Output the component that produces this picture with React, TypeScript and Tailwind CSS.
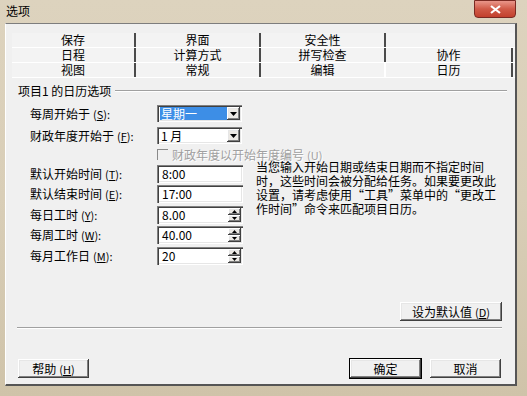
import type { ReactNode } from 'react';

const raised =
  'shadow-[inset_-1px_-1px_0_#404040,inset_1px_1px_0_#ffffff,inset_-2px_-2px_0_#808080,inset_2px_2px_0_#e6e6e6]';
const sunken =
  'shadow-[inset_1px_1px_0_#808080,inset_2px_2px_0_#404040,inset_-1px_-1px_0_#ffffff,inset_-2px_-2px_0_#e6e6e6]';

const tabRows = [
  ['保存', '界面', '安全性', ''],
  ['日程', '计算方式', '拼写检查', '协作'],
  ['视图', '常规', '编辑', '日历'],
];

const tabWidths = ['w-[124px]', 'w-[125px]', 'w-[125px]', 'w-[127px]'];

function tabEdge(row: number, col: number) {
  if (row === 0 && col === 3) return 'border-r-2 border-transparent';
  if (row === 2 && col === 2) return 'border-r-2 border-[#ffffff]';
  return 'border-r-2 border-[#4a4a4a]';
}

function Key({ k }: { k: string }) {
  return (
    <span className="ml-[3px] text-[11px]">
      (<span className="underline">{k}</span>):
    </span>
  );
}

function Row({ label, k, children, className = '' }: { label: string; k: string; children: ReactNode; className?: string }) {
  return (
    <div className={'flex items-center ' + className}>
      <div className="w-[127px] whitespace-nowrap">
        {label}
        <Key k={k} />
      </div>
      {children}
    </div>
  );
}

function Combo({ value, selected }: { value: string; selected?: boolean }) {
  return (
    <div className={'flex h-[17px] w-[85px] items-center bg-white p-[2px] ' + sunken}>
      <div className="flex h-full flex-1 items-center pl-[1px]">
        <span className={selected ? 'flex h-full w-full items-center bg-[#3d8ee6] pl-[1px] text-white' : 'pl-[1px]'}>
          {value}
        </span>
      </div>
      <div className={'flex h-full w-[13px] items-center justify-center bg-[#ece9e4] ' + raised}>
        <svg width="7" height="4" viewBox="0 0 7 4">
          <path d="M0 0h7L3.5 4z" fill="#000" />
        </svg>
      </div>
    </div>
  );
}

function TextBox({ value }: { value: string }) {
  return (
    <div className={'flex h-[18px] w-[86px] items-center bg-white pl-[5px] ' + sunken}>
      {value}
    </div>
  );
}

function Spin({ value }: { value: string }) {
  return (
    <div className={'flex h-[18px] w-[86px] items-center bg-white p-[2px] ' + sunken}>
      <div className="flex-1 pl-[3px]">{value}</div>
      <div className="flex h-full w-[13px] flex-col">
        <div className={'flex flex-1 items-center justify-center bg-[#ece9e4] ' + raised}>
          <svg width="5" height="3" viewBox="0 0 5 3">
            <path d="M0 3h5L2.5 0z" fill="#000" />
          </svg>
        </div>
        <div className={'flex flex-1 items-center justify-center bg-[#ece9e4] ' + raised}>
          <svg width="5" height="3" viewBox="0 0 5 3">
            <path d="M0 0h5L2.5 3z" fill="#000" />
          </svg>
        </div>
      </div>
    </div>
  );
}

function Btn({ children, w, isDefault }: { children: ReactNode; w: string; isDefault?: boolean }) {
  return (
    <div
      className={
        'flex h-[19px] items-center justify-center bg-[#f0f0f0] ' +
        w +
        ' ' +
        (isDefault ? 'outline outline-1 outline-[#000] ' : '') +
        raised
      }
    >
      {children}
    </div>
  );
}

export default function App() {
  return (
    <div
      className="flex h-[396px] w-[527px] flex-col bg-gradient-to-b from-[#ddd3be] via-[#d9ceb7] to-[#cfc3a9] text-[12px] leading-[14px] text-black"
      style={{ fontFamily: '"Noto Sans CJK SC", "Noto Sans", sans-serif' }}
    >
      {/* title bar */}
      <div className="flex h-[23px] shrink-0 items-start justify-between pl-[6px] pr-[11px]">
        <span className="mt-[4px]">选项</span>
        <div className="flex h-[18px] w-[42px] items-center justify-center rounded-b-[4px] border border-[#7a2a22] bg-gradient-to-b from-[#e9968a] via-[#d05a47] to-[#c2402d]">
          <svg width="11" height="9" viewBox="0 0 11 9">
            <path d="M1 1l9 7M10 1L1 8" stroke="#fff" strokeWidth="2.2" />
          </svg>
        </div>
      </div>

      {/* client area */}
      <div className="ml-[5px] flex h-[363px] w-[512px] flex-col border-t border-l border-t-[#7d7d7d] border-l-[#ffffff] border-b-2 border-r-2 border-b-[#555] border-r-[#555] bg-[#f0f0f0]">
        {/* tabs */}
        <div className="pl-[6px] pt-[9px]">
          {tabRows.map((row, r) => (
            <div key={r} className="flex h-[15px] border-b border-white bg-[#f3f3f3]">
              {row.map((t, c) => (
                <div key={c} className={'flex items-center justify-center ' + tabWidths[c] + ' ' + tabEdge(r, c)}>
                  {t}
                </div>
              ))}
            </div>
          ))}
        </div>

        {/* page */}
        <div className="flex flex-1 flex-col pl-[12px]">
          <div className="mt-[6px] flex items-center pr-[8px]">
            <span className="whitespace-nowrap">项目1 的日历选项</span>
            <div className="ml-[4px] flex-1 border-t border-b border-t-[#a0a0a0] border-b-white" />
          </div>

          <div className="mt-[7px] flex">
            <div className="w-[225px] pl-[12px]">
              <Row label="每周开始于" k="S">
                <Combo value="星期一" selected />
              </Row>
              <Row label="财政年度开始于" k="F" className="mt-[5px]">
                <Combo value="1 月" />
              </Row>
              <div className="mt-[4px] flex h-[13px] items-center pl-[127px] whitespace-nowrap text-[#a0a0a0] [text-shadow:1px_1px_0_#ffffff]">
                <div className="mr-[4px] h-[11px] w-[11px] shrink-0 border-t border-l border-[#8a8a8a] border-b-white border-r-white bg-[#f0f0f0]" />
                财政年度以开始年度编号
                <span className="ml-[3px] text-[11px]">(U)</span>
              </div>
              <Row label="默认开始时间" k="T" className="mt-[4px]">
                <TextBox value="8:00" />
              </Row>
              <Row label="默认结束时间" k="E" className="mt-[2px]">
                <TextBox value="17:00" />
              </Row>
              <Row label="每日工时" k="Y" className="mt-[3px]">
                <Spin value="8.00" />
              </Row>
              <Row label="每周工时" k="W" className="mt-[2px]">
                <Spin value="40.00" />
              </Row>
              <Row label="每月工作日" k="M" className="mt-[3px]">
                <Spin value="20" />
              </Row>
            </div>
            <p className="ml-[13px] mt-[55px] text-[12px] leading-[14px]">
              当您输入开始日期或结束日期而不指定时间
              <br />
              时，这些时间会被分配给任务。如果要更改此
              <br />
              设置，请考虑使用“工具”菜单中的“更改工
              <br />
              作时间”命令来匹配项目日历。
            </p>
          </div>

          <div className="mt-[37px] flex justify-end pr-[13px]">
            <Btn w="w-[102px]">
              设为默认值<span className="ml-[3px] text-[11px]">(<span className="underline">D</span>)</span>
            </Btn>
          </div>
          <div className="mr-[13px] mt-[6px] ml-[-1px] border-t border-b border-t-[#a0a0a0] border-b-white" />
        </div>

        {/* bottom buttons */}
        <div className="flex items-center pb-[6px] pl-[12px] pr-[14px]">
          <Btn w="w-[71px]">
            帮助<span className="ml-[3px] text-[11px]">(<span className="underline">H</span>)</span>
          </Btn>
          <div className="flex-1" />
          <Btn w="w-[71px]" isDefault>
            确定
          </Btn>
          <div className="w-[9px]" />
          <Btn w="w-[71px]">取消</Btn>
        </div>
      </div>
    </div>
  );
}
